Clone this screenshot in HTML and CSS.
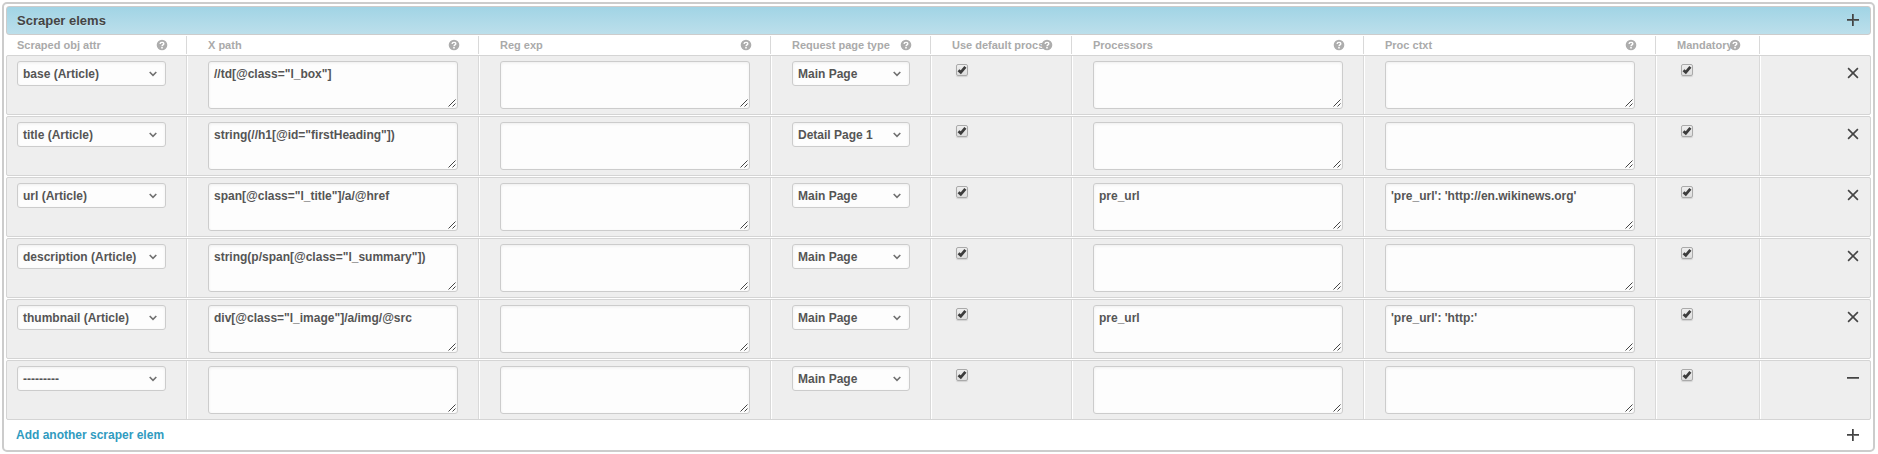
FILE: index.html
```
<!DOCTYPE html>
<html lang="en">
<head>
<meta charset="utf-8">
<title>Scraper elems</title>
<link rel="stylesheet" href="styles.css">
</head>
<body>
<svg class="defs" width="0" height="0" aria-hidden="true">
  <symbol id="help" viewBox="0 0 12 12"><circle cx="6" cy="6" r="5.3" fill="#adadad"/><path d="M4.1 4.9C4.1 2.9 7.8 2.8 7.8 4.7C7.8 5.9 6 5.9 6 7.2" fill="none" stroke="#fff" stroke-width="1.4"/><path d="M5.2 8h1.6v1.4H5.2z" fill="#fff"/></symbol>
  <symbol id="chevron" viewBox="0 0 8 6"><path d="M.7 1L4 4.3L7.3 1" fill="none" stroke="#707070" stroke-width="1.6"/></symbol>
  <symbol id="plus" viewBox="0 0 12 12"><path d="M0 6h12v1H0zM6 0h1v12H6z" fill="#444" opacity=".75"/><path d="M0 5h12v1H0zM5 0h1v12H5z" fill="#444"/></symbol>
  <symbol id="minus" viewBox="0 0 12 12"><path d="M0 6h12v1H0z" fill="#444" opacity=".75"/><path d="M0 5h12v1H0z" fill="#444"/></symbol>
  <symbol id="cross" viewBox="0 0 12 12"><path d="M1.1 1.1L10.9 10.9M10.9 1.1L1.1 10.9" stroke="#444" stroke-width="1.6"/></symbol>
  <symbol id="check" viewBox="0 0 12 12"><path d="M2.5 6.2L4.8 8.3L9.4 2.9" fill="none" stroke="#3c3c3c" stroke-width="2.8"/></symbol>
  <symbol id="grip" viewBox="0 0 8 8"><path d="M.5 7.5L7.5 .5M4.5 7.5L7.5 4.5" fill="none" stroke="#444" stroke-width="1"/></symbol>
</svg>
<section class="group">
  <header class="bar"><h2>Scraper elems</h2><svg class="tool"><use href="#plus"/></svg></header>
  <div class="grid heads" id="heads"></div>
  <div class="rows" id="rows"></div>
  <footer class="foot"><a>Add another scraper elem</a><svg class="tool"><use href="#plus"/></svg></footer>
</section>
<script src="app.js"></script>
</body>
</html>
```
FILE: styles.css
```
* { box-sizing: border-box; }
body { margin: 0; padding: 2px; background: #fff; font: bold 12px/15px "Liberation Sans", Arial, sans-serif; color: #444; }
.defs { display: block; }
.group { width: 1873px; height: 450px; border: 2px solid #ccc; border-radius: 5px; padding: 2px 2px 0; display: flex; flex-direction: column; }
.group > * { flex: none; }
.bar { height: 29px; border: 1px solid #ccc; border-radius: 3px; background: linear-gradient(#a1d4e5, #bcdfeb); display: flex; align-items: flex-start; justify-content: space-between; padding: 6px 11px 0 10px; }
.bar .tool { margin-top: 1px; }
.bar h2 { margin: 0; font-size: 13px; line-height: 15px; text-shadow: 0 1px 0 rgba(255,255,255,.25); }
.tool { width: 12px; height: 12px; display: block; }
.grid { display: grid; grid-template-columns: 181px 292px 292px 160px 141px 292px 292px 104px 111px; }
.heads { height: 20px; padding: 1px 0; font-size: 11px; color: #aaa; }
.head { border-right: 1px solid #d9d9d9; padding: 1px 18px 0 21px; display: flex; align-items: center; justify-content: space-between; white-space: nowrap; }
.head:first-child { padding-left: 11px; }
.head:last-child { border-right: 0; }
.head span { min-width: 0; flex: 1; }
.help { width: 12px; height: 12px; flex: none; margin-bottom: 1px; }
.rows { display: flex; flex-direction: column; gap: 1px; }
.row { height: 60px; border: 1px solid #d4d4d4; border-radius: 2px; background: #eee; grid-template-columns: 180px 292px 292px 160px 141px 292px 292px 104px 110px; }
.cell { border-left: 1px solid #fff; border-right: 1px solid #d9d9d9; padding: 5px 20px 0; }
.cell:first-child { border-left: 0; padding-left: 10px; }
.cell:last-child { border-right: 0; padding: 11px 11px 0 0; display: flex; justify-content: flex-end; }
.field { background: #fdfdfd; border: 1px solid #ccc; border-radius: 3px; box-shadow: inset 0 1px 3px #eee; color: #555; white-space: nowrap; }
.select { height: 25px; display: flex; align-items: center; justify-content: space-between; padding: 1px 8px 0 5px; }
.cell:first-child .select { width: 149px; }
.select svg { width: 8px; height: 6px; }
.area { height: 48px; display: flex; justify-content: space-between; padding: 5px 1px 1px 5px; }
.area svg { width: 8px; height: 8px; align-self: flex-end; }
.box { width: 12px; height: 12px; margin: 3px 0 0 4px; border: 1px solid #aaa; border-radius: 2px; background: linear-gradient(#eee, #ddd); box-shadow: 0 1px 1px rgba(0,0,0,.12); }
.box svg { display: block; width: 12px; height: 12px; margin: -1px; }
.foot { height: 30px; display: flex; align-items: center; justify-content: space-between; padding: 0 12px 0 10px; }
.foot a { color: #309bbf; }
```
FILE: app.js
```
const icon = (id, cls = '') => `<svg class="${cls}"><use href="#${id}"/></svg>`;
const titles = ['Scraped obj attr', 'X path', 'Reg exp', 'Request page type', 'Use default procs', 'Processors', 'Proc ctxt', 'Mandatory'];
const records = [
  ['base (Article)', '//td[@class="l_box"]', 'Main Page', '', ''],
  ['title (Article)', 'string(//h1[@id="firstHeading"])', 'Detail Page 1', '', ''],
  ['url (Article)', 'span[@class="l_title"]/a/@href', 'Main Page', 'pre_url', "'pre_url': 'http://en.wikinews.org'"],
  ['description (Article)', 'string(p/span[@class="l_summary"])', 'Main Page', '', ''],
  ['thumbnail (Article)', 'div[@class="l_image"]/a/img/@src', 'Main Page', 'pre_url', "'pre_url': 'http:'"],
  ['---------', '', 'Main Page', '', '']
];
const select = t => `<div class="field select"><span>${t}</span>${icon('chevron')}</div>`;
const area = t => `<div class="field area"><span>${t}</span>${icon('grip')}</div>`;
const box = `<div class="box">${icon('check')}</div>`;
document.getElementById('heads').innerHTML =
  titles.map(t => `<div class="head"><span>${t}</span>${icon('help', 'help')}</div>`).join('') + '<div class="head"></div>';
document.getElementById('rows').innerHTML = records.map(([attr, path, page, proc, ctxt], i) => {
  const tool = icon(i === records.length - 1 ? 'minus' : 'cross', 'tool');
  return '<div class="grid row">' +
    [select(attr), area(path), area(''), select(page), box, area(proc), area(ctxt), box, tool]
      .map(c => `<div class="cell">${c}</div>`).join('') + '</div>';
}).join('');
```
